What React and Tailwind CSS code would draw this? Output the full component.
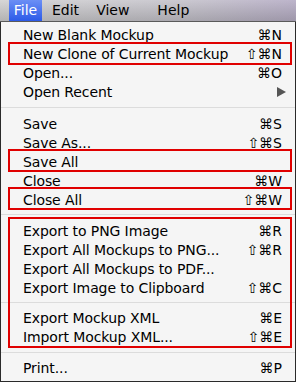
import React from "react";

const font = { fontFamily: '"DejaVu Sans", "Liberation Sans", sans-serif' };

function Row({ label, sc, arrow }) {
  return (
    <div className="flex h-[19px] items-center justify-between pl-[22px] pr-[13px] text-[14px] leading-none text-black">
      <span className="tracking-[-0.1px]">{label}</span>
      {sc ? <span>{sc}</span> : null}
      {arrow ? (
        <svg width="9" height="10" viewBox="0 0 9 10" className="mr-[-4px]">
          <path d="M0 0 L9 5 L0 10 Z" fill="#555" />
        </svg>
      ) : null}
    </div>
  );
}

function Sep({ h, top }) {
  return (
    <div className="flex flex-col" style={{ height: h }}>
      <div style={{ height: top }} />
      <div className="h-px bg-[#dcdcdc]" />
    </div>
  );
}

export default function App() {
  return (
    <div className="relative h-[382px] w-[296px] overflow-hidden bg-[#f5f5f5]" style={font}>
      <div className="flex h-[22px] items-stretch border-b border-[#5a5a5a] bg-[linear-gradient(to_right,#e4e4e4,#d8d6de_60%,#c9c0d8),linear-gradient(to_bottom,#f0f0f0,#c8c8c8)] bg-blend-multiply text-[14px] text-black">
        <div className="ml-[9px] flex w-[33px] items-center justify-center bg-[linear-gradient(to_bottom,#6b8ff5,#2c5ae8)] text-white">File</div>
        <div className="ml-[10px] flex items-center">Edit</div>
        <div className="ml-[17px] flex items-center">View</div>
        <div className="ml-[28px] flex items-center">Help</div>
      </div>
      <div className="flex flex-col border-x border-b border-[#2a2a2a] pt-[3px] pb-[4px]" style={{ height: 360 }}>
        <Row label="New Blank Mockup" sc="⌘N" />
        <Row label="New Clone of Current Mockup" sc="⇧⌘N" />
        <Row label="Open..." sc="⌘O" />
        <Row label="Open Recent" arrow />
        <Sep h={13} top={6} />
        <Row label="Save" sc="⌘S" />
        <Row label="Save As..." sc="⇧⌘S" />
        <Row label="Save All" />
        <Row label="Close" sc="⌘W" />
        <Row label="Close All" sc="⇧⌘W" />
        <Sep h={12} top={5} />
        <Row label="Export to PNG Image" sc="⌘R" />
        <Row label="Export All Mockups to PNG..." sc="⇧⌘R" />
        <Row label="Export All Mockups to PDF..." />
        <Row label="Export Image to Clipboard" sc="⇧⌘C" />
        <Sep h={11} top={5} />
        <Row label="Export Mockup XML" sc="⌘E" />
        <Row label="Import Mockup XML..." sc="⇧⌘E" />
        <Sep h={12} top={6} />
        <Row label="Print..." sc="⌘P" />
      </div>
      <div className="absolute left-[8px] top-[42px] h-[23px] w-[284px] border-2 border-[#e00000]" />
      <div className="absolute left-[8px] top-[149px] h-[23px] w-[284px] border-2 border-[#e00000]" />
      <div className="absolute left-[8px] top-[187px] h-[23px] w-[284px] border-2 border-[#e00000]" />
      <div className="absolute left-[8px] top-[217px] h-[131px] w-[284px] border-2 border-[#e00000]" />
    </div>
  );
}
